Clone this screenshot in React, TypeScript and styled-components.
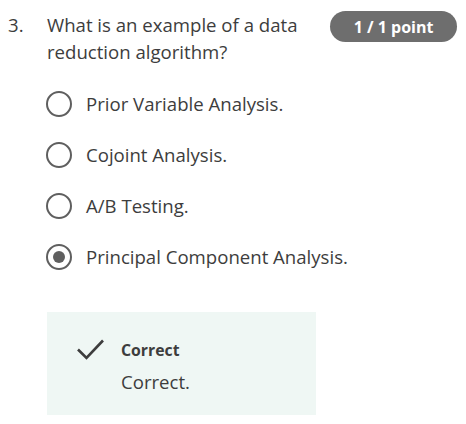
import React from 'react'
import styled, { createGlobalStyle } from 'styled-components'

const GlobalStyle = createGlobalStyle`
  body {
    margin: 0;
    background: #ffffff;
    font-family: "Open Sans", "Liberation Sans", sans-serif;
    color: #3d3d3d;
  }
`

const Page = styled.div`
  width: 466px;
  height: 424px;
  padding: 11px 9px 0 8px;
  box-sizing: border-box;
`

const QuestionRow = styled.div`
  display: flex;
  align-items: flex-start;
`

const Number = styled.div`
  width: 39px;
  font-size: 18.6px;
  line-height: 27px;
  flex-shrink: 0;
`

const QuestionText = styled.div`
  flex: 1;
  font-size: 18.6px;
  line-height: 27px;
  padding-right: 8px;
`

const Badge = styled.div`
  flex-shrink: 0;
  width: 127px;
  height: 31px;
  border-radius: 16px;
  background: #6e6e6e;
  color: #ffffff;
  font-weight: 700;
  font-size: 16px;
  display: flex;
  align-items: center;
  justify-content: center;
`

const Options = styled.div`
  display: flex;
  flex-direction: column;
  gap: 25px;
  margin: 26px 0 0 38px;
`

const Option = styled.label`
  display: flex;
  align-items: center;
  gap: 14px;
  font-size: 18.6px;
  line-height: 26px;
`

const Radio = styled.span<{ checked?: boolean }>`
  width: 26px;
  height: 26px;
  box-sizing: border-box;
  border: 2.5px solid #5f5f5f;
  border-radius: 50%;
  display: flex;
  align-items: center;
  justify-content: center;
  flex-shrink: 0;
  &::after {
    content: '';
    display: ${({ checked }) => (checked ? 'block' : 'none')};
    width: 12px;
    height: 12px;
    border-radius: 50%;
    background: #5f5f5f;
  }
`

const Feedback = styled.div`
  margin: 42px 0 0 39px;
  width: 269px;
  height: 103px;
  background: #eff7f4;
  box-sizing: border-box;
  padding: 27px 0 0 30px;
  display: flex;
  gap: 17px;
`

const FeedbackText = styled.div`
  display: flex;
  flex-direction: column;
`

const FeedbackTitle = styled.div`
  font-weight: 700;
  font-size: 15.8px;
  line-height: 22px;
`

const FeedbackBody = styled.div`
  font-size: 18.6px;
  line-height: 26px;
  margin-top: 8px;
`

const answers = [
  { text: 'Prior Variable Analysis.', checked: false },
  { text: 'Cojoint Analysis.', checked: false },
  { text: 'A/B Testing.', checked: false },
  { text: 'Principal Component Analysis.', checked: true },
]

const App = () => {
  return (
    <>
      <GlobalStyle />
      <Page>
        <QuestionRow>
          <Number>3.</Number>
          <QuestionText>What is an example of a data reduction algorithm?</QuestionText>
          <Badge>1 / 1 point</Badge>
        </QuestionRow>
        <Options>
          {answers.map((a) => (
            <Option key={a.text}>
              <Radio checked={a.checked} />
              {a.text}
            </Option>
          ))}
        </Options>
        <Feedback>
          <svg width="27" height="21" viewBox="0 0 27 21">
            <path d="M1 10.5 L9.5 19 L26 1.5" fill="none" stroke="#3d3d3d" strokeWidth="2.6" />
          </svg>
          <FeedbackText>
            <FeedbackTitle>Correct</FeedbackTitle>
            <FeedbackBody>Correct.</FeedbackBody>
          </FeedbackText>
        </Feedback>
      </Page>
    </>
  )
}

export default App
